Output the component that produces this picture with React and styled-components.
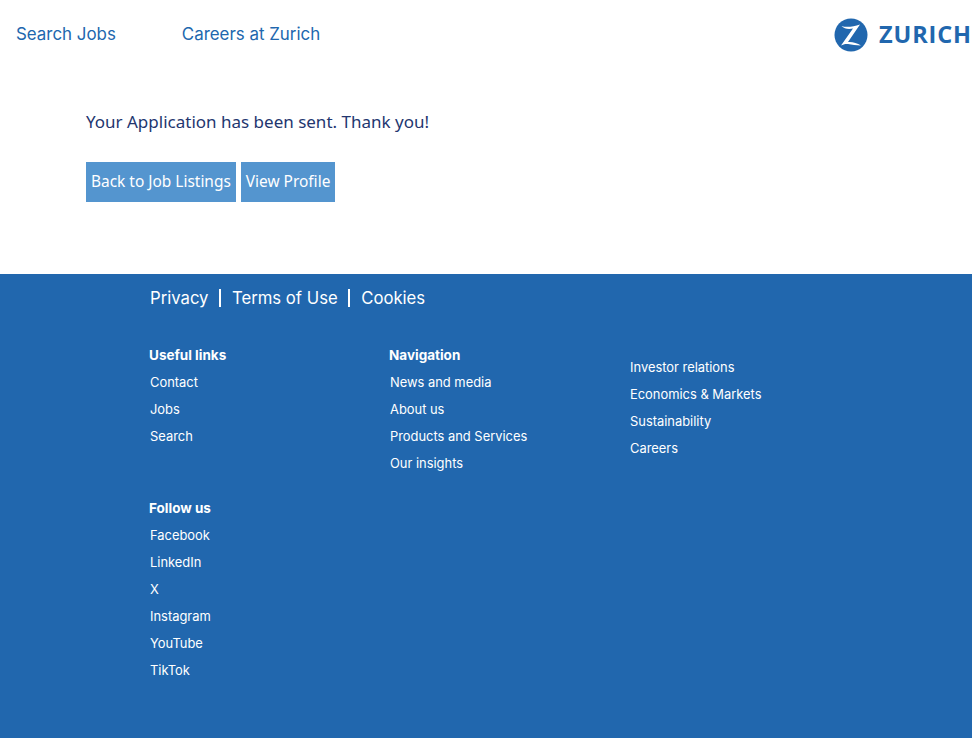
import React from 'react'
import styled, { createGlobalStyle } from 'styled-components'

const GlobalStyle = createGlobalStyle`
  html, body {
    margin: 0;
    padding: 0;
    background: #fff;
    font-family: Inter, "Noto Sans", sans-serif;
  }
`

const Header = styled.header`
  height: 68px;
  display: flex;
  align-items: center;
  justify-content: space-between;
  padding-left: 16px;
`

const TopNav = styled.nav`
  display: flex;
  gap: 66px;
`

const TopLink = styled.a`
  font-size: 16.9px;
  color: #2167ae;
  text-decoration: none;
`

const Logo = styled.div`
  display: flex;
  align-items: center;
  gap: 11px;
  margin-top: 2px;
  color: #2167ae;
`

const LogoWord = styled.span`
  font-family: "Open Sans", sans-serif;
  font-size: 23.5px;
  font-weight: 700;
  letter-spacing: 0.9px;
  line-height: 30px;
  padding-bottom: 2px;
  white-space: nowrap;
`

const Main = styled.main`
  height: 206px;
  box-sizing: border-box;
  padding: 42px 0 0 86px;
`

const Message = styled.p`
  margin: 0 0 28px;
  font-family: "Noto Sans", sans-serif;
  font-size: 17px;
  line-height: 24px;
  color: #23366f;
`

const Actions = styled.div`
  display: flex;
  gap: 5px;
`

const ActionButton = styled.a`
  height: 40px;
  box-sizing: border-box;
  padding: 0 5px 2px;
  display: flex;
  align-items: center;
  background: #5495cf;
  color: #fff;
  font-family: "Noto Sans", sans-serif;
  font-size: 15.45px;
  white-space: nowrap;
`

const Footer = styled.footer`
  height: 464px;
  box-sizing: border-box;
  background: #2167ae;
  color: #fff;
  padding: 12px 0 0 150px;
`

const LegalRow = styled.div`
  display: flex;
  align-items: center;
  height: 24px;
  margin-bottom: 32px;
  font-size: 16.7px;
`

const LegalLink = styled.a`
  line-height: 18px;
  padding-right: ${({ $last }) => ($last ? 0 : '10px')};
  margin-right: ${({ $last }) => ($last ? 0 : '11.5px')};
  border-right: ${({ $last }) => ($last ? 'none' : '2px solid #fff')};
`

const Columns = styled.div`
  display: grid;
  grid-template-columns: 240px 240px 240px;
`

const Column = styled.div`
  display: flex;
  flex-direction: column;
  padding-top: ${({ $offset }) => $offset || 0}px;
`

const Group = styled.div`
  margin-bottom: ${({ $gap }) => $gap || 0}px;
`

const GroupTitle = styled.div`
  height: 27px;
  line-height: 27px;
  margin-left: -1px;
  font-size: 13.5px;
  font-weight: 700;
`

const FooterLink = styled.a`
  display: block;
  height: 27px;
  line-height: 27px;
  font-size: 12.9px;
`

const ZurichMark = () => (
  <svg width="34" height="34" viewBox="0 0 34 34" aria-hidden="true">
    <circle cx="17" cy="17" r="16.5" fill="#2167ae" />
    <path
      d="M7.5 8C12 9.5 19 9 26 6.5L14 24C18 23.5 23 25 27 27.5C22 27.5 18 26.5 14 26C11.5 25.7 9 26.3 7 27.5L19 10.5C15 11.3 10 11 7.5 8Z"
      fill="#fff"
    />
  </svg>
)

const App = () => (
  <>
    <GlobalStyle />
    <Header>
      <TopNav>
        <TopLink>Search Jobs</TopLink>
        <TopLink>Careers at Zurich</TopLink>
      </TopNav>
      <Logo>
        <ZurichMark />
        <LogoWord>ZURICH</LogoWord>
      </Logo>
    </Header>
    <Main>
      <Message>Your Application has been sent. Thank you!</Message>
      <Actions>
        <ActionButton>Back to Job Listings</ActionButton>
        <ActionButton>View Profile</ActionButton>
      </Actions>
    </Main>
    <Footer>
      <LegalRow>
        <LegalLink>Privacy</LegalLink>
        <LegalLink>Terms of Use</LegalLink>
        <LegalLink $last>Cookies</LegalLink>
      </LegalRow>
      <Columns>
        <Column>
          <Group $gap={45}>
            <GroupTitle>Useful links</GroupTitle>
            <FooterLink>Contact</FooterLink>
            <FooterLink>Jobs</FooterLink>
            <FooterLink>Search</FooterLink>
          </Group>
          <Group>
            <GroupTitle>Follow us</GroupTitle>
            <FooterLink>Facebook</FooterLink>
            <FooterLink>LinkedIn</FooterLink>
            <FooterLink>X</FooterLink>
            <FooterLink>Instagram</FooterLink>
            <FooterLink>YouTube</FooterLink>
            <FooterLink>TikTok</FooterLink>
          </Group>
        </Column>
        <Column>
          <Group>
            <GroupTitle>Navigation</GroupTitle>
            <FooterLink>News and media</FooterLink>
            <FooterLink>About us</FooterLink>
            <FooterLink>Products and Services</FooterLink>
            <FooterLink>Our insights</FooterLink>
          </Group>
        </Column>
        <Column $offset={12}>
          <FooterLink>Investor relations</FooterLink>
          <FooterLink>Economics &amp; Markets</FooterLink>
          <FooterLink>Sustainability</FooterLink>
          <FooterLink>Careers</FooterLink>
        </Column>
      </Columns>
    </Footer>
  </>
)

export default App
